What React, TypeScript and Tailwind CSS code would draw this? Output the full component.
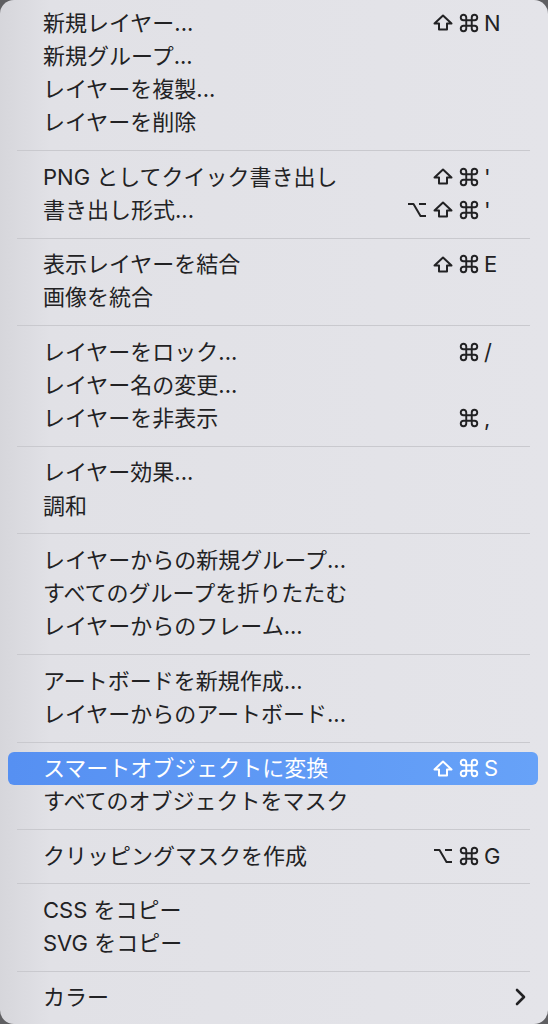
import { FC } from 'react'
import { Command } from 'lucide-react'

type Mod = 'shift' | 'cmd' | 'opt'

type Item = {
  label: string
  mods?: Mod[]
  keyChar?: string
  active?: boolean
  submenu?: boolean
}

const groups: Item[][] = [
  [
    { label: '新規レイヤー...', mods: ['shift', 'cmd'], keyChar: 'N' },
    { label: '新規グループ...' },
    { label: 'レイヤーを複製...' },
    { label: 'レイヤーを削除' },
  ],
  [
    { label: 'PNG としてクイック書き出し', mods: ['shift', 'cmd'], keyChar: "'" },
    { label: '書き出し形式...', mods: ['opt', 'shift', 'cmd'], keyChar: "'" },
  ],
  [
    { label: '表示レイヤーを結合', mods: ['shift', 'cmd'], keyChar: 'E' },
    { label: '画像を統合' },
  ],
  [
    { label: 'レイヤーをロック...', mods: ['cmd'], keyChar: '/' },
    { label: 'レイヤー名の変更...' },
    { label: 'レイヤーを非表示', mods: ['cmd'], keyChar: ',' },
  ],
  [{ label: 'レイヤー効果...' }, { label: '調和' }],
  [
    { label: 'レイヤーからの新規グループ...' },
    { label: 'すべてのグループを折りたたむ' },
    { label: 'レイヤーからのフレーム...' },
  ],
  [{ label: 'アートボードを新規作成...' }, { label: 'レイヤーからのアートボード...' }],
  [
    { label: 'スマートオブジェクトに変換', mods: ['shift', 'cmd'], keyChar: 'S', active: true },
    { label: 'すべてのオブジェクトをマスク' },
  ],
  [{ label: 'クリッピングマスクを作成', mods: ['opt', 'cmd'], keyChar: 'G' }],
  [{ label: 'CSS をコピー' }, { label: 'SVG をコピー' }],
  [{ label: 'カラー', submenu: true }],
]

// modifier key glyphs, drawn to match the macOS menu symbols
const ModIcon: FC<{ mod: Mod }> = ({ mod }) => {
  if (mod === 'cmd') return <Command size={22} strokeWidth={2.1} />
  if (mod === 'shift')
    return (
      <svg width="20" height="17" viewBox="0 0 20 17" fill="none">
        <path d="M10 1.5 L18.5 9.5 H14 V15.5 H6 V9.5 H1.5 Z" stroke="currentColor" strokeWidth="2" strokeLinejoin="round" />
      </svg>
    )
  return (
    <svg width="20" height="16" viewBox="0 0 20 16" fill="none">
      <path d="M1 2 H6.5 L13.5 14 H19 M12 2 H19" stroke="currentColor" strokeWidth="2" strokeLinejoin="round" />
    </svg>
  )
}

const MenuRow: FC<{ item: Item }> = ({ item }) => {
  const { label, mods, keyChar, active, submenu } = item
  return (
    <div
      className={`mx-[8px] w-[530px] h-[33.25px] flex items-center rounded-[6px] ${
        active ? 'bg-linear-to-r from-[#5690f2] to-[#67a2f8] text-white' : 'text-[#222224]'
      }`}
    >
      <div className="flex-1 pl-[35px] text-[22px] leading-none whitespace-nowrap font-['Inter','Noto_Sans_CJK_JP',sans-serif]">
        {label}
      </div>
      {keyChar && (
        <div className="flex items-center">
          <div className="flex items-center">
            {mods?.map((m, i) => (
              <span key={i} className="w-[26px] flex justify-center">
                <ModIcon mod={m} />
              </span>
            ))}
          </div>
          <span className="w-[56px] pl-[2px] text-[22px] leading-none font-['Inter',sans-serif]">{keyChar}</span>
        </div>
      )}
      {submenu && (
        <svg className="mr-[12px]" width="11" height="18" viewBox="0 0 11 18" fill="none">
          <polyline points="2,2 9,9 2,16" stroke="#222224" strokeWidth="2.6" strokeLinecap="round" strokeLinejoin="round" />
        </svg>
      )}
    </div>
  )
}

const App: FC = () => {
  return (
    <div className="w-[548px] h-[1024px] bg-[#5f5f62]">
      <div className="w-full h-full rounded-[14px] overflow-hidden pt-[6px] bg-[linear-gradient(to_right,#d6d6db_0px,#e1e1e6_50px,#e4e4e9_100%)]">
        {groups.map((group, gi) => (
          <div key={gi}>
            {gi > 0 && (
              <div className="h-[21px] pt-[11px]">
                <div className="ml-[17px] mr-[18px] h-px bg-[#c9c9ce]" />
              </div>
            )}
            {group.map((item, ii) => (
              <MenuRow key={ii} item={item} />
            ))}
          </div>
        ))}
      </div>
    </div>
  )
}

export default App
